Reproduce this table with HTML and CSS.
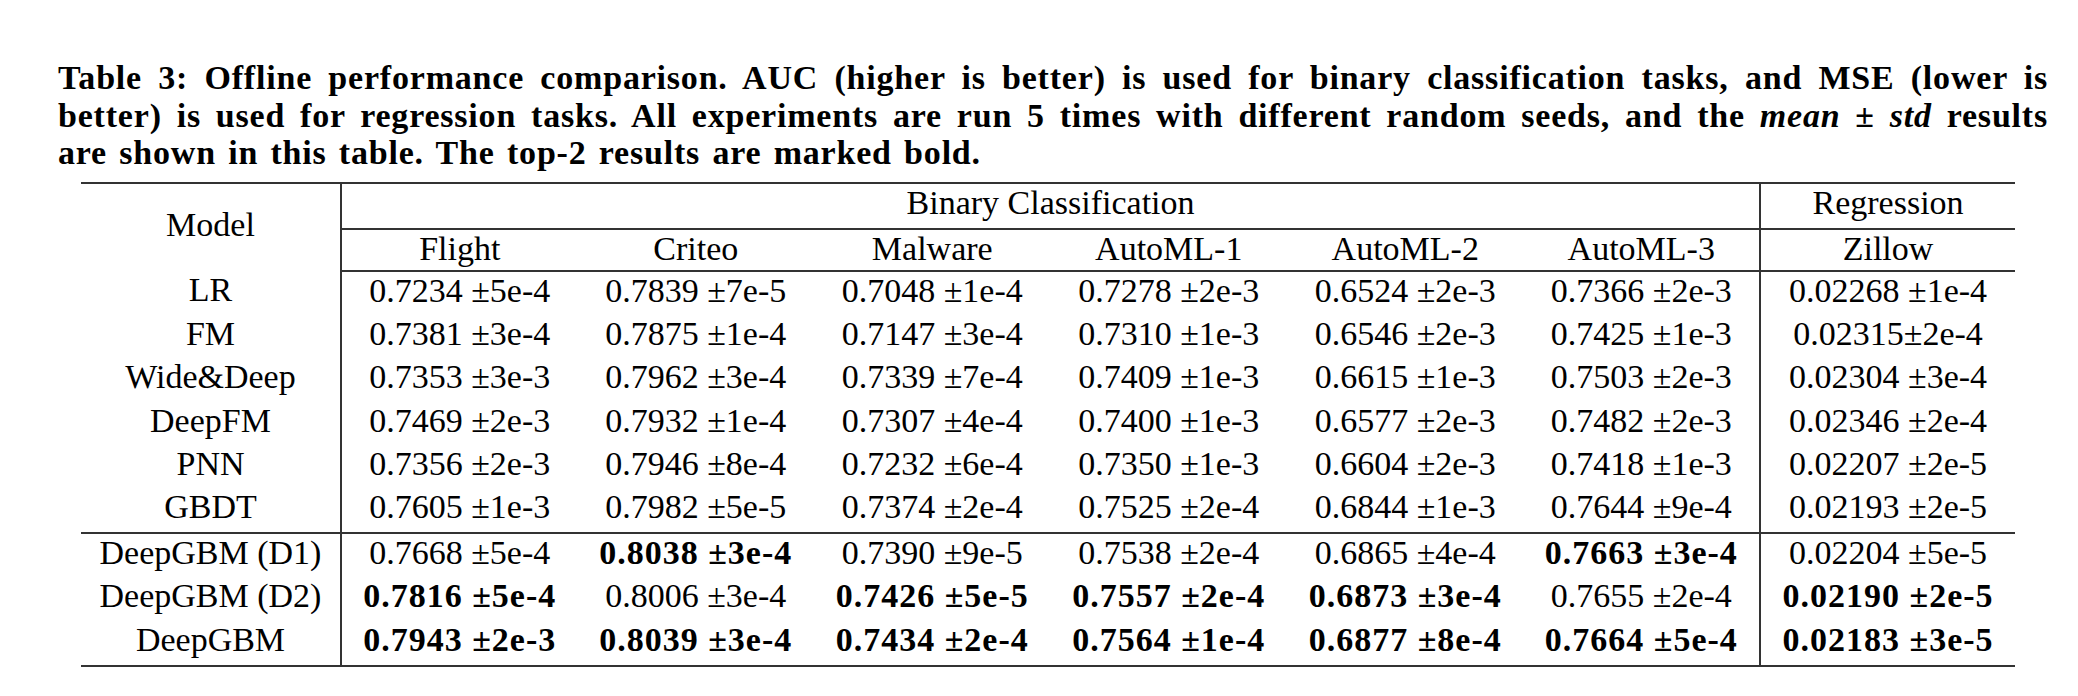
FILE: index.html
```html
<!DOCTYPE html>
<html lang="en">

<head>
    <meta charset="UTF-8">
    <meta name="viewport" content="width=device-width, initial-scale=1.0">
    <title>Table 3</title>
    <link rel="stylesheet" href="styles.css">
</head>

<body>

    <div class="caption">
        <span class="cap-line">Table 3: Offline performance comparison. AUC (higher is better) is used for binary classification tasks, and MSE (lower is</span>
        <span class="cap-line">better) is used for regression tasks. All experiments are run 5 times with different random seeds, and the <em>mean</em> &plusmn; <em>std</em> results</span>
        <span class="cap-line last">are shown in this table. The top-2 results are marked bold.</span>
    </div>

    <table class="results">
        <colgroup>
            <col class="c-model">
            <col class="c-num">
            <col class="c-num">
            <col class="c-num">
            <col class="c-num">
            <col class="c-num">
            <col class="c-num">
            <col class="c-reg">
        </colgroup>
        <thead>
            <tr class="group-row">
                <th rowspan="2" class="model">Model</th>
                <th colspan="6" class="group">Binary Classification</th>
                <th class="reg group">Regression</th>
            </tr>
            <tr class="name-row">
                <th>Flight</th>
                <th>Criteo</th>
                <th>Malware</th>
                <th>AutoML-1</th>
                <th>AutoML-2</th>
                <th>AutoML-3</th>
                <th class="reg">Zillow</th>
            </tr>
        </thead>
        <tbody class="baselines">
            <tr>
                <td class="model">LR</td>
                <td>0.7234 &plusmn;5e-4</td>
                <td>0.7839 &plusmn;7e-5</td>
                <td>0.7048 &plusmn;1e-4</td>
                <td>0.7278 &plusmn;2e-3</td>
                <td>0.6524 &plusmn;2e-3</td>
                <td>0.7366 &plusmn;2e-3</td>
                <td class="reg">0.02268 &plusmn;1e-4</td>
            </tr>
            <tr>
                <td class="model">FM</td>
                <td>0.7381 &plusmn;3e-4</td>
                <td>0.7875 &plusmn;1e-4</td>
                <td>0.7147 &plusmn;3e-4</td>
                <td>0.7310 &plusmn;1e-3</td>
                <td>0.6546 &plusmn;2e-3</td>
                <td>0.7425 &plusmn;1e-3</td>
                <td class="reg">0.02315&plusmn;2e-4</td>
            </tr>
            <tr>
                <td class="model">Wide&amp;Deep</td>
                <td>0.7353 &plusmn;3e-3</td>
                <td>0.7962 &plusmn;3e-4</td>
                <td>0.7339 &plusmn;7e-4</td>
                <td>0.7409 &plusmn;1e-3</td>
                <td>0.6615 &plusmn;1e-3</td>
                <td>0.7503 &plusmn;2e-3</td>
                <td class="reg">0.02304 &plusmn;3e-4</td>
            </tr>
            <tr>
                <td class="model">DeepFM</td>
                <td>0.7469 &plusmn;2e-3</td>
                <td>0.7932 &plusmn;1e-4</td>
                <td>0.7307 &plusmn;4e-4</td>
                <td>0.7400 &plusmn;1e-3</td>
                <td>0.6577 &plusmn;2e-3</td>
                <td>0.7482 &plusmn;2e-3</td>
                <td class="reg">0.02346 &plusmn;2e-4</td>
            </tr>
            <tr>
                <td class="model">PNN</td>
                <td>0.7356 &plusmn;2e-3</td>
                <td>0.7946 &plusmn;8e-4</td>
                <td>0.7232 &plusmn;6e-4</td>
                <td>0.7350 &plusmn;1e-3</td>
                <td>0.6604 &plusmn;2e-3</td>
                <td>0.7418 &plusmn;1e-3</td>
                <td class="reg">0.02207 &plusmn;2e-5</td>
            </tr>
            <tr>
                <td class="model">GBDT</td>
                <td>0.7605 &plusmn;1e-3</td>
                <td>0.7982 &plusmn;5e-5</td>
                <td>0.7374 &plusmn;2e-4</td>
                <td>0.7525 &plusmn;2e-4</td>
                <td>0.6844 &plusmn;1e-3</td>
                <td>0.7644 &plusmn;9e-4</td>
                <td class="reg">0.02193 &plusmn;2e-5</td>
            </tr>
        </tbody>
        <tbody class="ours">
            <tr>
                <td class="model">DeepGBM (D1)</td>
                <td>0.7668 &plusmn;5e-4</td>
                <td class="top">0.8038 &plusmn;3e-4</td>
                <td>0.7390 &plusmn;9e-5</td>
                <td>0.7538 &plusmn;2e-4</td>
                <td>0.6865 &plusmn;4e-4</td>
                <td class="top">0.7663 &plusmn;3e-4</td>
                <td class="reg">0.02204 &plusmn;5e-5</td>
            </tr>
            <tr>
                <td class="model">DeepGBM (D2)</td>
                <td class="top">0.7816 &plusmn;5e-4</td>
                <td>0.8006 &plusmn;3e-4</td>
                <td class="top">0.7426 &plusmn;5e-5</td>
                <td class="top">0.7557 &plusmn;2e-4</td>
                <td class="top">0.6873 &plusmn;3e-4</td>
                <td>0.7655 &plusmn;2e-4</td>
                <td class="reg top">0.02190 &plusmn;2e-5</td>
            </tr>
            <tr>
                <td class="model">DeepGBM</td>
                <td class="top">0.7943 &plusmn;2e-3</td>
                <td class="top">0.8039 &plusmn;3e-4</td>
                <td class="top">0.7434 &plusmn;2e-4</td>
                <td class="top">0.7564 &plusmn;1e-4</td>
                <td class="top">0.6877 &plusmn;8e-4</td>
                <td class="top">0.7664 &plusmn;5e-4</td>
                <td class="reg top">0.02183 &plusmn;3e-5</td>
            </tr>
        </tbody>
    </table>

</body>

</html>
```

FILE: styles.css
```css
body {
    margin: 0;
    background-color: #fff;
    color: #000;
    font-family: "Liberation Serif", "Times New Roman", serif;
}

/* caption */

.caption {
    width: 1990px;
    margin: 59px 0 0 58px;
    font-size: 34px;
    line-height: 37.6px;
    font-weight: bold;
    letter-spacing: 0.8px;
    word-spacing: 3px;
}

.cap-line {
    display: block;
    white-space: nowrap;
    text-align: justify;
    text-align-last: justify;
}

.cap-line.last {
    text-align-last: left;
}

.caption em {
    font-style: italic;
}

/* table */

.results {
    margin: 10px 0 0 81px;
    width: 1934px;
    table-layout: fixed;
    border-collapse: collapse;
    font-size: 34px;
    border-top: 2px solid #333;
    border-bottom: 2px solid #333;
}

.c-model {
    width: 260px;
}

.c-num {
    width: 236.5px;
}

.c-reg {
    width: 255px;
}

.results th,
.results td {
    padding: 0;
    text-align: center;
    font-weight: normal;
    white-space: nowrap;
}

.group-row th {
    height: 37px;
    padding-bottom: 6px;
}

.group-row .group {
    border-bottom: 2px solid #333;
}

.results th.model {
    padding-bottom: 4px;
}

.name-row th {
    height: 38px;
    padding-bottom: 2px;
    border-bottom: 2px solid #333;
}

.results td {
    line-height: 37.3px;
    padding-bottom: 6px;
}

.ours td {
    line-height: 37.8px;
}

.results .model {
    border-right: 2px solid #333;
}

.results .reg {
    border-left: 2px solid #333;
}

.ours tr:first-child td {
    border-top: 2px solid #333;
}

.results td.top {
    font-weight: bold;
    letter-spacing: 1px;
}
```
